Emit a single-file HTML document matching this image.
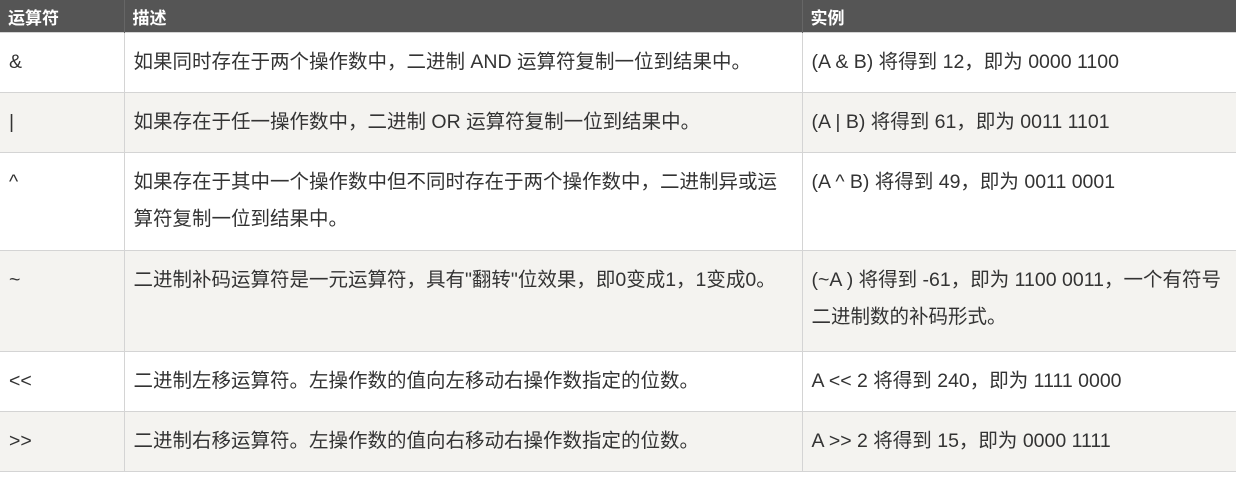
<!DOCTYPE html>
<html><head><meta charset="utf-8"><style>
body{margin:0;background:#fff;font-family:"Liberation Sans","Noto Sans CJK SC",sans-serif;font-size:19.5px;color:#333;}
table{border-collapse:collapse;width:1236px;table-layout:fixed;}
th{background:#555;color:#fff;text-align:left;font-weight:bold;height:32px;padding:0 8px;font-size:17px;border-right:1px solid #666;}
td{border:1px solid #d4d4d4;padding:11px 9px;line-height:37px;vertical-align:top;white-space:nowrap;}
td:first-child{border-left:none;}
td:last-child{border-right:none;}
tr.a td{background:#f4f3f0;}
</style></head><body>
<table>
<colgroup><col style="width:124px"><col style="width:678px"><col style="width:434px"></colgroup>
<tr><th>运算符</th><th>描述</th><th>实例</th></tr>
<tr style="height:60px"><td>&amp;</td><td>如果同时存在于两个操作数中，二进制 AND 运算符复制一位到结果中。</td><td>(A &amp; B) 将得到 12，即为 0000 1100</td></tr>
<tr class="a" style="height:60px"><td>|</td><td>如果存在于任一操作数中，二进制 OR 运算符复制一位到结果中。</td><td>(A | B) 将得到 61，即为 0011 1101</td></tr>
<tr style="height:98px"><td>^</td><td>如果存在于其中一个操作数中但不同时存在于两个操作数中，二进制异或运<br>算符复制一位到结果中。</td><td>(A ^ B) 将得到 49，即为 0011 0001</td></tr>
<tr class="a" style="height:101px"><td>~</td><td>二进制补码运算符是一元运算符，具有"翻转"位效果，即0变成1，1变成0。</td><td>(~A ) 将得到 -61，即为 1100 0011，一个有符号<br>二进制数的补码形式。</td></tr>
<tr style="height:59px"><td>&lt;&lt;</td><td>二进制左移运算符。左操作数的值向左移动右操作数指定的位数。</td><td>A &lt;&lt; 2 将得到 240，即为 1111 0000</td></tr>
<tr class="a" style="height:59px"><td>&gt;&gt;</td><td>二进制右移运算符。左操作数的值向右移动右操作数指定的位数。</td><td>A &gt;&gt; 2 将得到 15，即为 0000 1111</td></tr>
</table>
</body></html>
